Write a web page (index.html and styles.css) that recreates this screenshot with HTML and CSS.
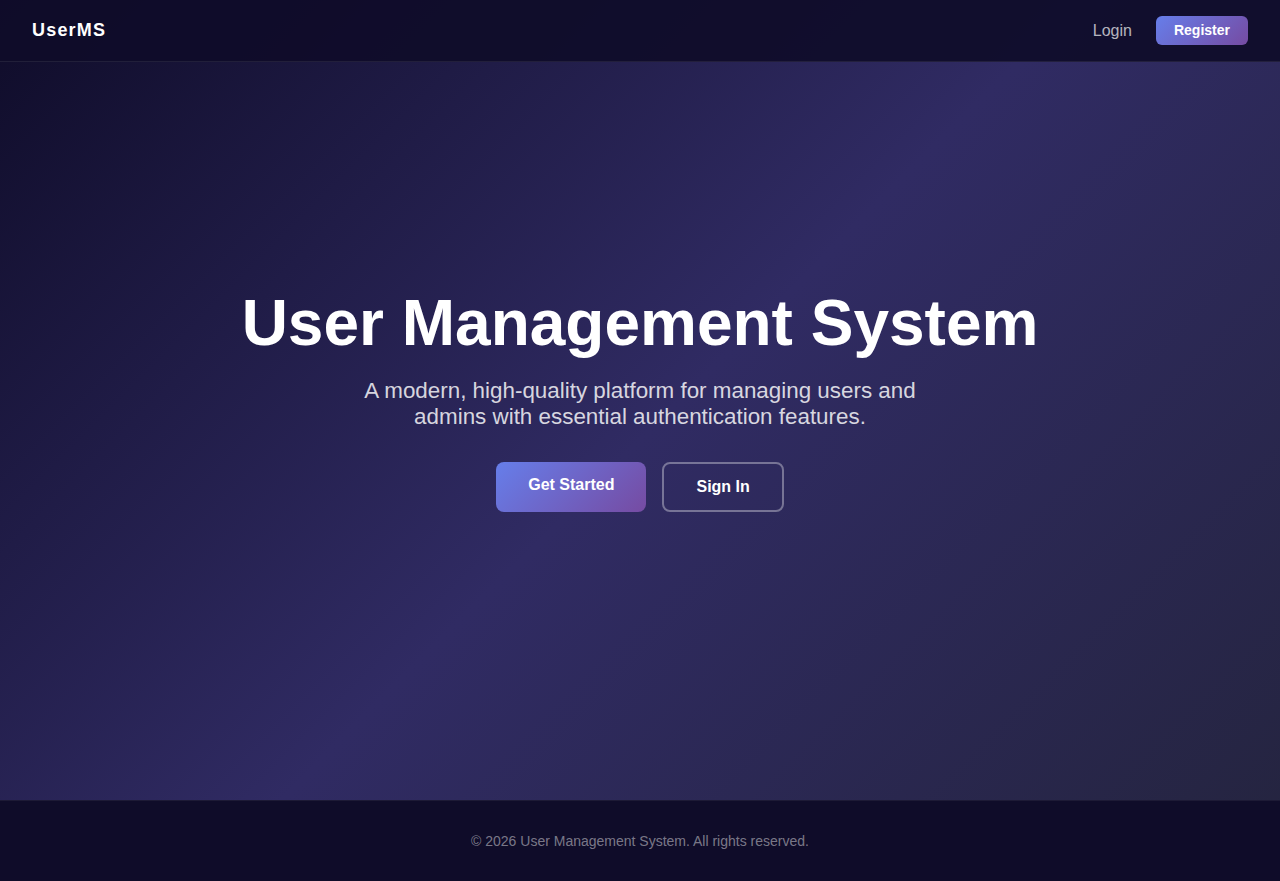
FILE: index.html
```html
<!DOCTYPE html>
<html lang="en">
<head>
    <meta charset="UTF-8">
    <meta name="viewport" content="width=device-width, initial-scale=1.0">
    <title>UserMS</title>
    <link rel="stylesheet" href="styles.css">
</head>
<body>
    <header class="navbar">
        <a class="logo" href="index.html">UserMS</a>
        <nav class="nav-links">
            <a class="nav-login" href="login.html">Login</a>
            <a class="nav-register" href="register.html">Register</a>
        </nav>
    </header>

    <main class="hero">
        <div class="hero-content">
            <h1>User Management System</h1>
            <p class="hero-text">A modern, high-quality platform for managing users and admins with essential authentication features.</p>
            <div class="hero-actions">
                <a class="btn btn-primary" href="register.html">Get Started</a>
                <a class="btn btn-outline" href="login.html">Sign In</a>
            </div>
        </div>
    </main>

    <footer class="footer">
        <p>&copy; 2026 User Management System. All rights reserved.</p>
    </footer>
</body>
</html>
```

FILE: styles.css
```css
* {
    box-sizing: border-box;
}

body {
    margin: 0;
    min-height: 100vh;
    display: flex;
    flex-direction: column;
    font-family: "Liberation Sans", Arial, sans-serif;
    color: white;
    background: linear-gradient(135deg, #0f0c29 0%, #302b63 50%, #24243e 100%);
}

a {
    text-decoration: none;
    color: inherit;
}

.navbar {
    display: flex;
    justify-content: space-between;
    align-items: center;
    padding: 16px 32px;
    background-color: rgba(15, 12, 41, 0.92);
    border-bottom: 1px solid rgba(255, 255, 255, 0.08);
}

.logo {
    font-size: 18px;
    font-weight: bold;
    letter-spacing: 1.2px;
    line-height: 29px;
}

.nav-links {
    display: flex;
    align-items: center;
    gap: 24px;
}

.nav-login {
    font-size: 16px;
    color: rgba(255, 255, 255, 0.7);
}

.nav-register {
    font-size: 14px;
    font-weight: bold;
    line-height: 17px;
    padding: 6px 18px;
    border-radius: 6px;
    background: linear-gradient(135deg, #667eea 0%, #764ba2 100%);
}

.hero {
    flex: 1;
    display: flex;
    align-items: center;
    justify-content: center;
    padding-bottom: 65px;
    text-align: center;
}

.hero-content h1 {
    font-size: 64px;
    line-height: 1.2;
    margin: 0 0 17px;
}

.hero-text {
    max-width: 600px;
    margin: 0 auto 32px;
    font-size: 22.4px;
    line-height: 26px;
    color: rgba(255, 255, 255, 0.82);
}

.hero-actions {
    display: flex;
    justify-content: center;
    gap: 16px;
}

.btn {
    font-size: 16px;
    font-weight: bold;
    line-height: 18px;
    padding: 14px 32px;
    border-radius: 8px;
}

.btn-primary {
    background: linear-gradient(135deg, #667eea 0%, #764ba2 100%);
}

.btn-outline {
    border: 2px solid rgba(255, 255, 255, 0.35);
}

.footer {
    padding: 32px;
    background-color: #0f0c29;
    border-top: 1px solid rgba(255, 255, 255, 0.06);
    text-align: center;
}

.footer p {
    margin: 0;
    font-size: 14px;
    line-height: 16px;
    color: rgba(255, 255, 255, 0.45);
}
```
